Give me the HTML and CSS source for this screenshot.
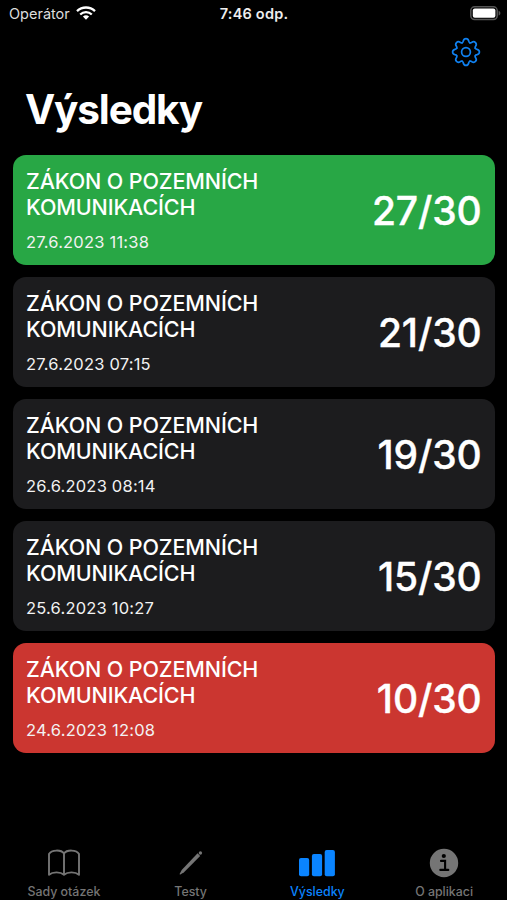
FILE: index.html
```html
<!DOCTYPE html>
<html lang="cs">
<head>
<meta charset="utf-8">
<title>Výsledky</title>
<link rel="stylesheet" href="styles.css">
</head>
<body>
<div class="app">
  <header class="status">
    <div class="carrier"><span>Operátor</span>
      <svg width="20" height="14" viewBox="0 0 20 14" fill="none" stroke="#fff" stroke-width="2.3"><path d="M1 5.1a13 13 0 0 1 18 0M4.2 8.5a8.4 8.4 0 0 1 11.6 0"/><path d="M6.9 10.6a4.5 4.5 0 0 1 6.2 0L10 13.7z" fill="#fff" stroke="none"/></svg>
    </div>
    <div class="time">7:46 odp.</div>
    <div class="battery">
      <svg width="31" height="15" viewBox="0 0 31 15"><rect x=".8" y=".8" width="26.4" height="12.8" rx="3.8" fill="none" stroke="#555" stroke-width="1.5"/><rect x="2.8" y="2.6" width="22.6" height="9.2" rx="2" fill="#fff"/><path d="M28.6 4.8c2.4.7 2.4 4.1 0 4.8z" fill="#555"/></svg>
    </div>
  </header>
  <nav class="toolbar">
    <svg width="30" height="30" viewBox="-15 -15 30 30" fill="none" stroke="#1081f0" stroke-width="1.7" stroke-linecap="round">
      <defs><path id="tooth" d="M-3.83-9.24Q-2.9-9.6-2.7-11Q-2.2-13.4 0-13.4Q2.2-13.4 2.7-11Q2.9-9.6 3.83-9.24"/></defs>
      <use href="#tooth"/><use href="#tooth" transform="rotate(45)"/><use href="#tooth" transform="rotate(90)"/><use href="#tooth" transform="rotate(135)"/><use href="#tooth" transform="rotate(180)"/><use href="#tooth" transform="rotate(225)"/><use href="#tooth" transform="rotate(270)"/><use href="#tooth" transform="rotate(315)"/>
      <circle r="4.4"/>
    </svg>
  </nav>
  <h1>Výsledky</h1>
  <main class="results">
    <article class="card pass"><div><h2>ZÁKON O POZEMNÍCH<br>KOMUNIKACÍCH</h2><p>27.6.2023 11:38</p></div><strong>27/30</strong></article>
    <article class="card"><div><h2>ZÁKON O POZEMNÍCH<br>KOMUNIKACÍCH</h2><p>27.6.2023 07:15</p></div><strong>21/30</strong></article>
    <article class="card"><div><h2>ZÁKON O POZEMNÍCH<br>KOMUNIKACÍCH</h2><p>26.6.2023 08:14</p></div><strong>19/30</strong></article>
    <article class="card"><div><h2>ZÁKON O POZEMNÍCH<br>KOMUNIKACÍCH</h2><p>25.6.2023 10:27</p></div><strong>15/30</strong></article>
    <article class="card fail"><div><h2>ZÁKON O POZEMNÍCH<br>KOMUNIKACÍCH</h2><p>24.6.2023 12:08</p></div><strong>10/30</strong></article>
  </main>
  <footer class="tabs">
    <div class="tab">
      <svg width="36" height="32" viewBox="0 0 36 32" fill="none" stroke="currentColor" stroke-width="1.9" stroke-linejoin="round"><path d="M19 7.6C16.5 3.6 6.5 3.4 4 8V28.8C7.6 25.6 15.4 25.6 19 28.8C22.6 25.6 30.4 25.6 34 28.8V8C31.5 3.4 21.5 3.6 19 7.6zV28.8"/></svg>
      <span>Sady otázek</span>
    </div>
    <div class="tab">
      <svg width="36" height="32" viewBox="0 0 36 32" fill="currentColor"><path d="M25.6 7.3l2.6 2.6L12 26.3l-3.6 2.2c-.6.3-1-.1-.7-.7l2-3.8z"/><circle cx="28.4" cy="7" r="1.7"/></svg>
      <span>Testy</span>
    </div>
    <div class="tab active">
      <svg width="36" height="32" viewBox="0 0 36 32" fill="currentColor"><rect x="0" y="12" width="10.2" height="18.2" rx="2"/><rect x="12.9" y="8" width="10.2" height="22.2" rx="2"/><rect x="25.7" y="4" width="10.2" height="26.2" rx="2"/></svg>
      <span>Výsledky</span>
    </div>
    <div class="tab">
      <svg width="36" height="32" viewBox="0 0 36 32"><circle cx="18" cy="17" r="14.2" fill="currentColor"/><circle cx="17.8" cy="10" r="2.1" fill="#000"/><path d="M15 14.9h4.1v8.8M14.3 23.9h8" fill="none" stroke="#000" stroke-width="2.1" stroke-linecap="round"/></svg>
      <span>O aplikaci</span>
    </div>
  </footer>
</div>
</body>
</html>
```

FILE: styles.css
```css
* { box-sizing: border-box; margin: 0; padding: 0; }
body { background: #000; color: #fff; font-family: Inter, "Liberation Sans", sans-serif; }
svg { display: block; overflow: visible; }
.app { width: 507px; height: 900px; display: flex; flex-direction: column; overflow: hidden; }
.status { height: 28px; display: grid; grid-template-columns: 1fr auto 1fr; align-items: center; padding: 0 6px 1px 9px; font-size: 14.5px; }
.carrier { display: flex; gap: 6px; align-items: center; color: #ddd; }
.carrier svg { margin-top: -2px; }
.time { font-weight: 600; color: #eee; letter-spacing: .2px; transform: translateX(-1px); }
.battery { justify-self: end; }
.toolbar { height: 49px; display: flex; justify-content: flex-end; padding: 9px 26px 0 0; }
h1 { height: 78px; padding-left: 25px; font-size: 40.5px; line-height: 65px; font-weight: 700; letter-spacing: -1.15px; }
.results { display: grid; gap: 12.1px; padding: 0 12.5px 0 13px; }
.card { height: 110px; border-radius: 13px; background: #1c1c1e; display: flex; justify-content: space-between; align-items: center; padding: 0 13px; }
.card.pass { background: #28a745; }
.card.fail { background: #cb3630; }
.card h2 { font-size: 21.5px; line-height: 26px; font-weight: 500; letter-spacing: -.12px; }
.card p { font-size: 16.5px; line-height: 20px; margin-top: 12px; color: #f2f2f2; letter-spacing: .2px; }
.card strong { padding-top: 1px; font-size: 39px; line-height: 46px; font-weight: 500; letter-spacing: -.15px; -webkit-text-stroke: .35px currentColor; }
.tabs { margin-top: auto; height: 54px; display: grid; grid-template-columns: repeat(4, 1fr); }
.tab { display: flex; flex-direction: column; align-items: center; color: #757575; font-size: 12.4px; line-height: 16px; font-weight: 500; }
.tab span { margin: 6px 0 0 1px; white-space: nowrap; }
.tab.active { color: #0a84ff; }
```
